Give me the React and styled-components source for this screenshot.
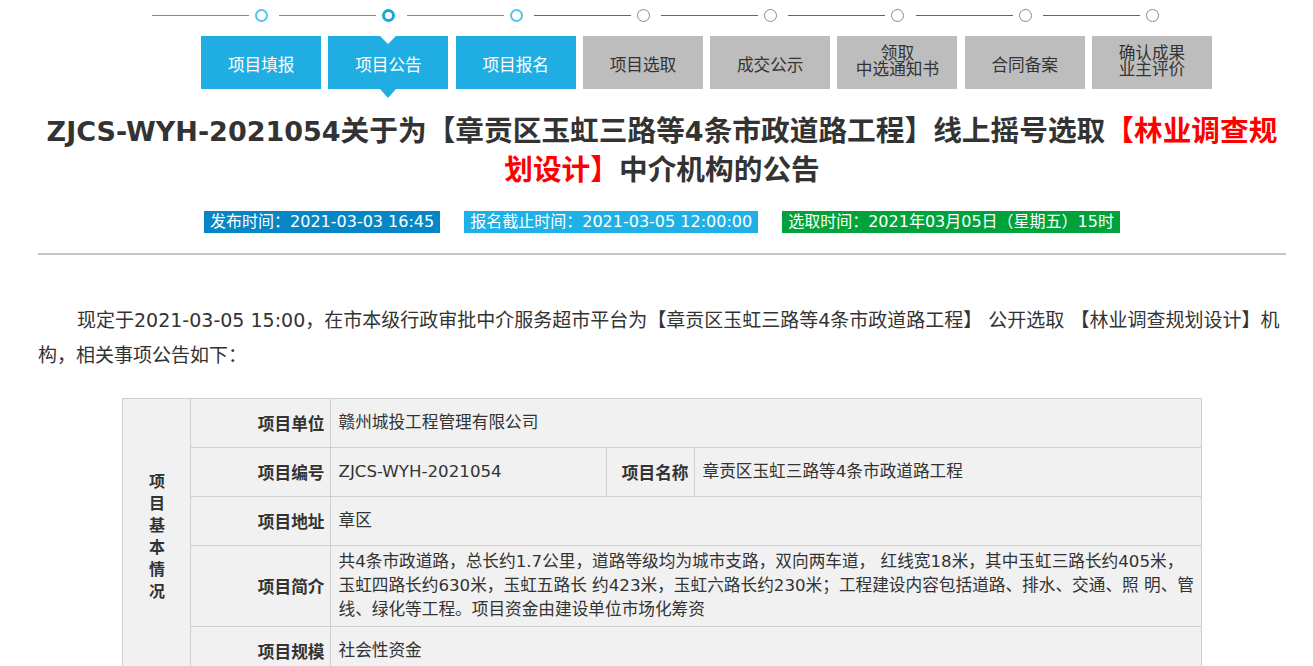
import React from "react";
import styled, { createGlobalStyle, css } from "styled-components";

const Global = createGlobalStyle`
  html, body { margin: 0; padding: 0; background: #fff; }
  body { font-family: "DejaVu Sans", "Noto Sans CJK SC", sans-serif; color: #333; }
`;

const Page = styled.div`
  width: 1248px;
  margin-left: 38px;
`;

const Timeline = styled.div`
  display: grid;
  grid-template-columns: repeat(8, 127.25px);
  margin-left: 114px;
  height: 31px;
  align-items: center;
`;

const TimeUnit = styled.div`
  display: flex;
  align-items: center;
  height: 31px;
`;

const Line = styled.span`
  width: 97px;
  height: 1px;
  background: ${(p) => (p.$done ? "#2aaae0" : "#666")};
  margin-right: 6px;
`;

const Dot = styled.span`
  box-sizing: border-box;
  width: 13px;
  height: 13px;
  border-radius: 50%;
  background: #fff;
  ${(p) =>
    p.$state === "current"
      ? css`border: 3px solid #1ea3dc;`
      : p.$state === "done"
      ? css`border: 2px solid #55c3ee;`
      : css`border: 1.5px solid #8a8a8a;`}
`;

const StepRow = styled.div`
  display: grid;
  grid-template-columns: repeat(8, 127.25px);
  margin-left: 159.6px;
  margin-top: 5px;
`;

const StepBtn = styled.div`
  position: relative;
  box-sizing: border-box;
  width: 120px;
  height: 53px;
  justify-self: center;
  display: flex;
  align-items: center;
  justify-content: center;
  text-align: center;
  font-family: "Noto Sans CJK SC", sans-serif;
  font-size: 16.67px;
  line-height: 16px;
  padding: ${(p) => (p.$multi ? "0 0 6px" : "3px 0 0")};
  background: ${(p) => (p.$done ? "#1fade2" : "#bdbdbd")};
  color: ${(p) => (p.$done ? "#fff" : "#333")};
  ${(p) =>
    p.$current &&
    css`
      &::before {
        content: "";
        position: absolute;
        top: 0;
        left: 50%;
        margin-left: -8px;
        border-left: 8px solid transparent;
        border-right: 8px solid transparent;
        border-top: 8px solid #fff;
      }
      &::after {
        content: "";
        position: absolute;
        top: 53px;
        left: 50%;
        margin-left: -8px;
        border-left: 8px solid transparent;
        border-right: 8px solid transparent;
        border-top: 9px solid #1fade2;
      }
    `}
`;

const Title = styled.h1`
  margin: 23px 0 0;
  padding: 0;
  font-size: 28.7px;
  line-height: 39px;
  font-weight: 700;
  text-align: center;
  color: #333;
`;

const Latin = styled.span`
  font-size: 27px;
`;

const Red = styled.span`
  color: #ff0000;
`;

const Badges = styled.div`
  display: flex;
  justify-content: center;
  gap: 24px;
  margin-top: 21px;
`;

const Badge = styled.span`
  height: 22px;
  line-height: 22px;
  padding: 0 6px;
  font-size: 16px;
  color: #fff;
  background: ${(p) => p.$bg};
`;

const Rule = styled.div`
  margin-top: 20px;
  height: 2px;
  background: #c6c6c6;
`;

const Para = styled.p`
  margin: 48px 0 0;
  font-size: 19px;
  line-height: 35px;
  text-indent: 39px;
  color: #333;
`;

const Table = styled.table`
  margin: 25px auto 0;
  width: 1078px;
  table-layout: fixed;
  border-collapse: collapse;
  background: #f1f1f1;
  font-size: 16.67px;
  color: #333;
`;

const Side = styled.td`
  border: 1px solid #cfcfcf;
  text-align: center;
  vertical-align: middle;
  font-weight: 700;
  font-size: 16px;
  line-height: 22px;
`;

const Label = styled.td`
  border: 1px solid #cfcfcf;
  text-align: right;
  padding: 0 6px 0 0;
  font-weight: 700;
  height: ${(p) => p.$h || 48}px;
  vertical-align: middle;
`;

const Value = styled.td`
  border: 1px solid #cfcfcf;
  text-align: left;
  padding: 4px 6px 4px 7px;
  line-height: 24px;
  vertical-align: middle;
`;

const steps = [
  ["项目填报"],
  ["项目公告"],
  ["项目报名"],
  ["项目选取"],
  ["成交公示"],
  ["领取", "中选通知书"],
  ["合同备案"],
  ["确认成果", "业主评价"],
];

export default function App() {
  return (
    <Page>
      <Global />
      <Timeline>
        {steps.map((_, i) => (
          <TimeUnit key={i}>
            <Line $done={i < 3} />
            <Dot $state={i === 1 ? "current" : i < 3 ? "done" : "todo"} />
          </TimeUnit>
        ))}
      </Timeline>
      <StepRow>
        {steps.map((s, i) => (
          <StepBtn key={i} $done={i < 3} $current={i === 1} $multi={s.length > 1}>
            <div>
              {s.map((t, j) => (
                <div key={j}>{t}</div>
              ))}
            </div>
          </StepBtn>
        ))}
      </StepRow>
      <Title>
        <Latin>ZJCS-WYH-2021054</Latin>关于为【章贡区玉虹三路等<Latin>4</Latin>条市政道路工程】线上摇号选取
        <Red>【林业调查规划设计】</Red>中介机构的公告
      </Title>
      <Badges>
        <Badge $bg="#0686c5">发布时间：2021-03-03 16:45</Badge>
        <Badge $bg="#1fb0e6">报名截止时间：2021-03-05 12:00:00</Badge>
        <Badge $bg="#00a33b">选取时间：2021年03月05日（星期五）15时</Badge>
      </Badges>
      <Rule />
      <Para>
        现定于2021-03-05 15:00，在市本级行政审批中介服务超市平台为【章贡区玉虹三路等4条市政道路工程】 公开选取 【林业调查规划设计】机构，相关事项公告如下：
      </Para>
      <Table>
        <colgroup>
          <col style={{ width: 68 }} />
          <col style={{ width: 140 }} />
          <col style={{ width: 276 }} />
          <col style={{ width: 88 }} />
          <col style={{ width: 506 }} />
        </colgroup>
        <tbody>
          <tr>
            <Side rowSpan={5}>
              项<br />目<br />基<br />本<br />情<br />况
            </Side>
            <Label>项目单位</Label>
            <Value colSpan={3}>赣州城投工程管理有限公司</Value>
          </tr>
          <tr>
            <Label>项目编号</Label>
            <Value>ZJCS-WYH-2021054</Value>
            <Label>项目名称</Label>
            <Value>章贡区玉虹三路等4条市政道路工程</Value>
          </tr>
          <tr>
            <Label>项目地址</Label>
            <Value colSpan={3}>章区</Value>
          </tr>
          <tr>
            <Label $h={79}>项目简介</Label>
            <Value colSpan={3}>
              共4条市政道路，总长约1.7公里，道路等级均为城市支路，双向两车道， 红线宽18米，其中玉虹三路长约405米，玉虹四路长约630米，玉虹五路长 约423米，玉虹六路长约230米；工程建设内容包括道路、排水、交通、照 明、管线、绿化等工程。项目资金由建设单位市场化筹资
            </Value>
          </tr>
          <tr>
            <Label>项目规模</Label>
            <Value colSpan={3}>社会性资金</Value>
          </tr>
        </tbody>
      </Table>
    </Page>
  );
}
